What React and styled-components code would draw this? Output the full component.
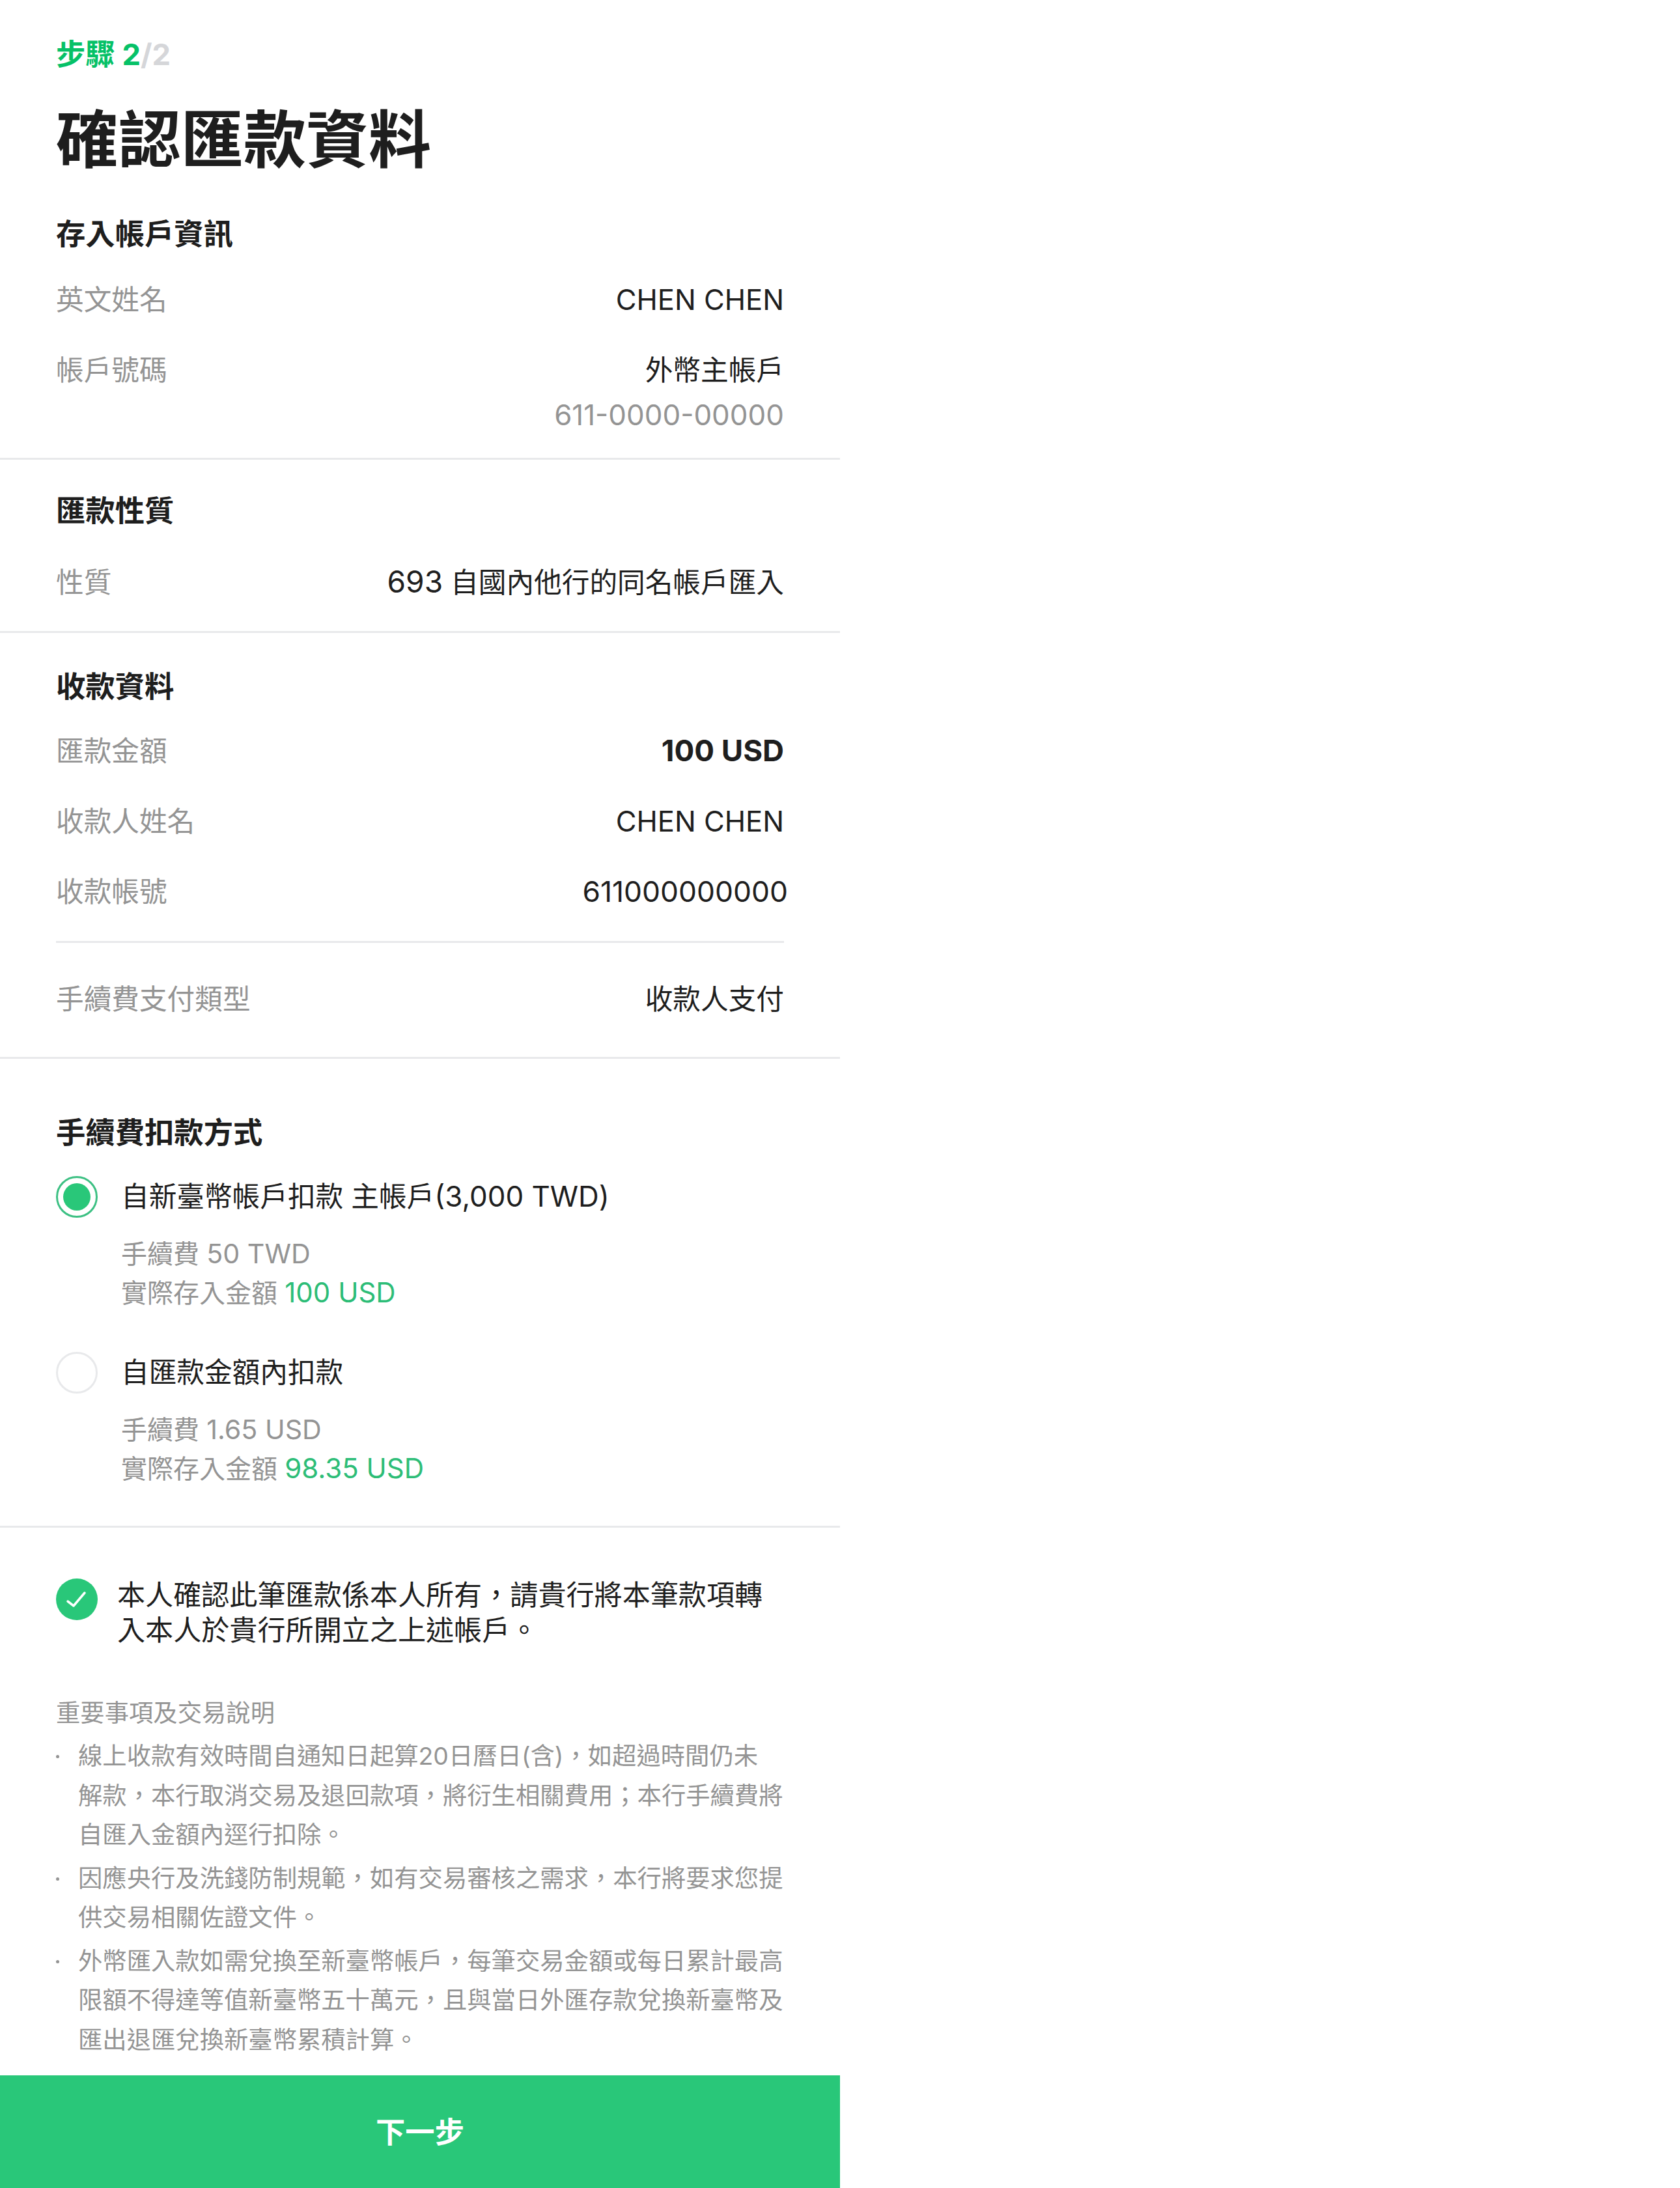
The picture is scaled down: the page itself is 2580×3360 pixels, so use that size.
import React from "react";
import styled, { createGlobalStyle } from "styled-components";

const GlobalStyle = createGlobalStyle`
  html, body {
    margin: 0;
    padding: 0;
    background: #fff;
  }
`;

const Page = styled.div`
  width: 1290px;
  height: 3360px;
  display: flex;
  flex-direction: column;
  overflow: hidden;
  font-family: Inter, "Noto Sans CJK TC", sans-serif;
  color: #1e1e1e;
`;

// latin and digits run a little wider than Inter at the same size
const Latin = styled.span`
  font-size: ${(p) => p.$scale || 1.03}em;
  line-height: 1;
`;

const Header = styled.header`
  padding: 52px 86px 0;
`;

const Step = styled.div`
  font-size: 45.33px;
  line-height: 64px;
  font-weight: 700;
  color: #06c167;
`;

const StepTotal = styled.span`
  color: #d5d6d9;
`;

const Title = styled.h1`
  margin: 34px 0 0;
  font-size: 96px;
  line-height: 129px;
  font-weight: 700;
  letter-spacing: 0;
`;

const Section = styled.section`
  padding: ${(p) => p.$top}px 86px ${(p) => p.$bottom}px;
  border-bottom: 3px solid #e8e9eb;
`;

const Heading = styled.h2`
  margin: 0 0 ${(p) => p.$gap}px;
  font-size: 45.33px;
  line-height: 64px;
  font-weight: 700;
`;

const Rows = styled.div`
  display: flex;
  flex-direction: column;
  gap: 44px;
`;

const Row = styled.div`
  display: flex;
  justify-content: space-between;
  font-size: 42.67px;
  line-height: 64px;
  margin-right: ${(p) => p.$overflow || 0}px;
`;

const Label = styled.div`
  color: #949494;
`;

const Value = styled.div`
  text-align: right;
  font-weight: ${(p) => (p.$bold ? 700 : 400)};
`;

const SubValue = styled.div`
  margin-top: 5px;
  color: #949494;
`;

const InnerRule = styled.hr`
  margin: 43px 0 55px;
  border: 0;
  border-top: 3px solid #e8e9eb;
`;

const Option = styled.div`
  display: flex;
  flex-direction: column;
  margin-top: ${(p) => p.$top || 0}px;
`;

const OptionHead = styled.div`
  display: flex;
  align-items: center;
  height: 64px;
  font-size: 42.67px;
  line-height: 64px;
`;

const OptionLabel = styled.span`
  white-space: pre;
`;

const Radio = styled.span`
  flex: none;
  box-sizing: border-box;
  width: 64px;
  height: 64px;
  margin-right: 36px;
  border-radius: 50%;
  border: ${(p) => (p.$on ? "3px solid #3cc083" : "3px solid #e8e9eb")};
  display: flex;
  align-items: center;
  justify-content: center;
  &::after {
    content: "";
    display: ${(p) => (p.$on ? "block" : "none")};
    width: 42px;
    height: 42px;
    border-radius: 50%;
    background: #29c779;
  }
`;

const OptionDetail = styled.div`
  margin: 26px 0 0 100px;
  font-size: 40px;
  line-height: 60px;
  color: #949494;
`;

const Green = styled.span`
  color: #2dbd77;
`;

const Agree = styled.div`
  display: flex;
  align-items: flex-start;
  padding: 76px 86px 0;
`;

const CheckCircle = styled.span`
  flex: none;
  width: 64px;
  height: 64px;
  margin: 2px 30px 0 0;
  border-radius: 50%;
  background: #29c779;
  display: flex;
`;

const AgreeText = styled.div`
  max-width: 1010px;
  font-size: 43.1px;
  line-height: 54px;
`;

const Notes = styled.div`
  padding: 71px 86px 0;
  font-size: 37.33px;
  color: #949494;
`;

const NotesTitle = styled.div`
  line-height: 60px;
`;

const NoteList = styled.ul`
  list-style: none;
  margin: 6px 0 0;
  padding: 0;
  display: flex;
  flex-direction: column;
  gap: 6px;
`;

const NoteItem = styled.li`
  position: relative;
  padding: 0 0 0 34px;
  line-height: 60.5px;
  &::before {
    content: "";
    position: absolute;
    left: 0;
    top: 28px;
    width: 5px;
    height: 5px;
    border-radius: 50%;
    background: #949494;
  }
`;

const NextButton = styled.button`
  margin-top: auto;
  flex: none;
  width: 100%;
  height: 173px;
  padding: 0 0 6px;
  border: 0;
  background: #29c779;
  color: #fff;
  font-family: inherit;
  font-size: 45.33px;
  font-weight: 700;
`;

const App = () => {
  return (
    <Page>
      <GlobalStyle />
      <Header>
        <Step>
          步驟 2<StepTotal>/2</StepTotal>
        </Step>
        <Title>確認匯款資料</Title>
      </Header>

      <Section $top={49} $bottom={33}>
        <Heading $gap={37}>存入帳戶資訊</Heading>
        <Rows>
          <Row>
            <Label>英文姓名</Label>
            <Value>
              <Latin $scale={1.02}>CHEN CHEN</Latin>
            </Value>
          </Row>
          <Row>
            <Label>帳戶號碼</Label>
            <Value>
              外幣主帳戶
              <SubValue>
                <Latin>611-0000-00000</Latin>
              </SubValue>
            </Value>
          </Row>
        </Rows>
      </Section>

      <Section $top={47} $bottom={42}>
        <Heading $gap={46}>匯款性質</Heading>
        <Row>
          <Label>性質</Label>
          <Value>
            <Latin $scale={1.08}>693</Latin> 自國內他行的同名帳戶匯入
          </Value>
        </Row>
      </Section>

      <Section $top={51} $bottom={56}>
        <Heading $gap={35}>收款資料</Heading>
        <Rows>
          <Row>
            <Label>匯款金額</Label>
            <Value $bold>
              <Latin $scale={1.07}>100 USD</Latin>
            </Value>
          </Row>
          <Row>
            <Label>收款人姓名</Label>
            <Value>
              <Latin $scale={1.02}>CHEN CHEN</Latin>
            </Value>
          </Row>
          <Row $overflow={-6}>
            <Label>收款帳號</Label>
            <Value>
              <Latin $scale={1.04}>611000000000</Latin>
            </Value>
          </Row>
        </Rows>
        <InnerRule />
        <Row>
          <Label>手續費支付類型</Label>
          <Value>收款人支付</Value>
        </Row>
      </Section>

      <Section $top={82} $bottom={57}>
        <Heading $gap={34}>手續費扣款方式</Heading>
        <Option>
          <OptionHead>
            <Radio $on />
            <OptionLabel>
              自新臺幣帳戶扣款 主帳戶<Latin>(3,000 TWD)</Latin>
            </OptionLabel>
          </OptionHead>
          <OptionDetail>
            手續費 <Latin>50 TWD</Latin>
            <br />
            實際存入金額 <Green><Latin $scale={1.05}>100 USD</Latin></Green>
          </OptionDetail>
        </Option>
        <Option $top={60}>
          <OptionHead>
            <Radio />
            <OptionLabel>自匯款金額內扣款</OptionLabel>
          </OptionHead>
          <OptionDetail>
            手續費 <Latin>1.65 USD</Latin>
            <br />
            實際存入金額 <Green><Latin $scale={1.05}>98.35 USD</Latin></Green>
          </OptionDetail>
        </Option>
      </Section>

      <Agree>
        <CheckCircle>
          <svg width="64" height="64" viewBox="0 0 64 64" fill="none">
            <path d="M18 35l9 7 17-20" stroke="#fff" strokeWidth="3.5" strokeLinecap="round" strokeLinejoin="round" />
          </svg>
        </CheckCircle>
        <AgreeText>本人確認此筆匯款係本人所有，請貴行將本筆款項轉入本人於貴行所開立之上述帳戶。</AgreeText>
      </Agree>

      <Notes>
        <NotesTitle>重要事項及交易說明</NotesTitle>
        <NoteList>
          <NoteItem>
            線上收款有效時間自通知日起算20日曆日(含)，如超過時間仍未
            <br />
            解款，本行取消交易及退回款項，將衍生相關費用；本行手續費將自匯入金額內逕行扣除。
          </NoteItem>
          <NoteItem>因應央行及洗錢防制規範，如有交易審核之需求，本行將要求您提供交易相關佐證文件。</NoteItem>
          <NoteItem>
            外幣匯入款如需兌換至新臺幣帳戶，每筆交易金額或每日累計最高限額不得達等值新臺幣五十萬元，且與當日外匯存款兌換新臺幣及匯出退匯兌換新臺幣累積計算。
          </NoteItem>
        </NoteList>
      </Notes>

      <NextButton>下一步</NextButton>
    </Page>
  );
};

export default App;
